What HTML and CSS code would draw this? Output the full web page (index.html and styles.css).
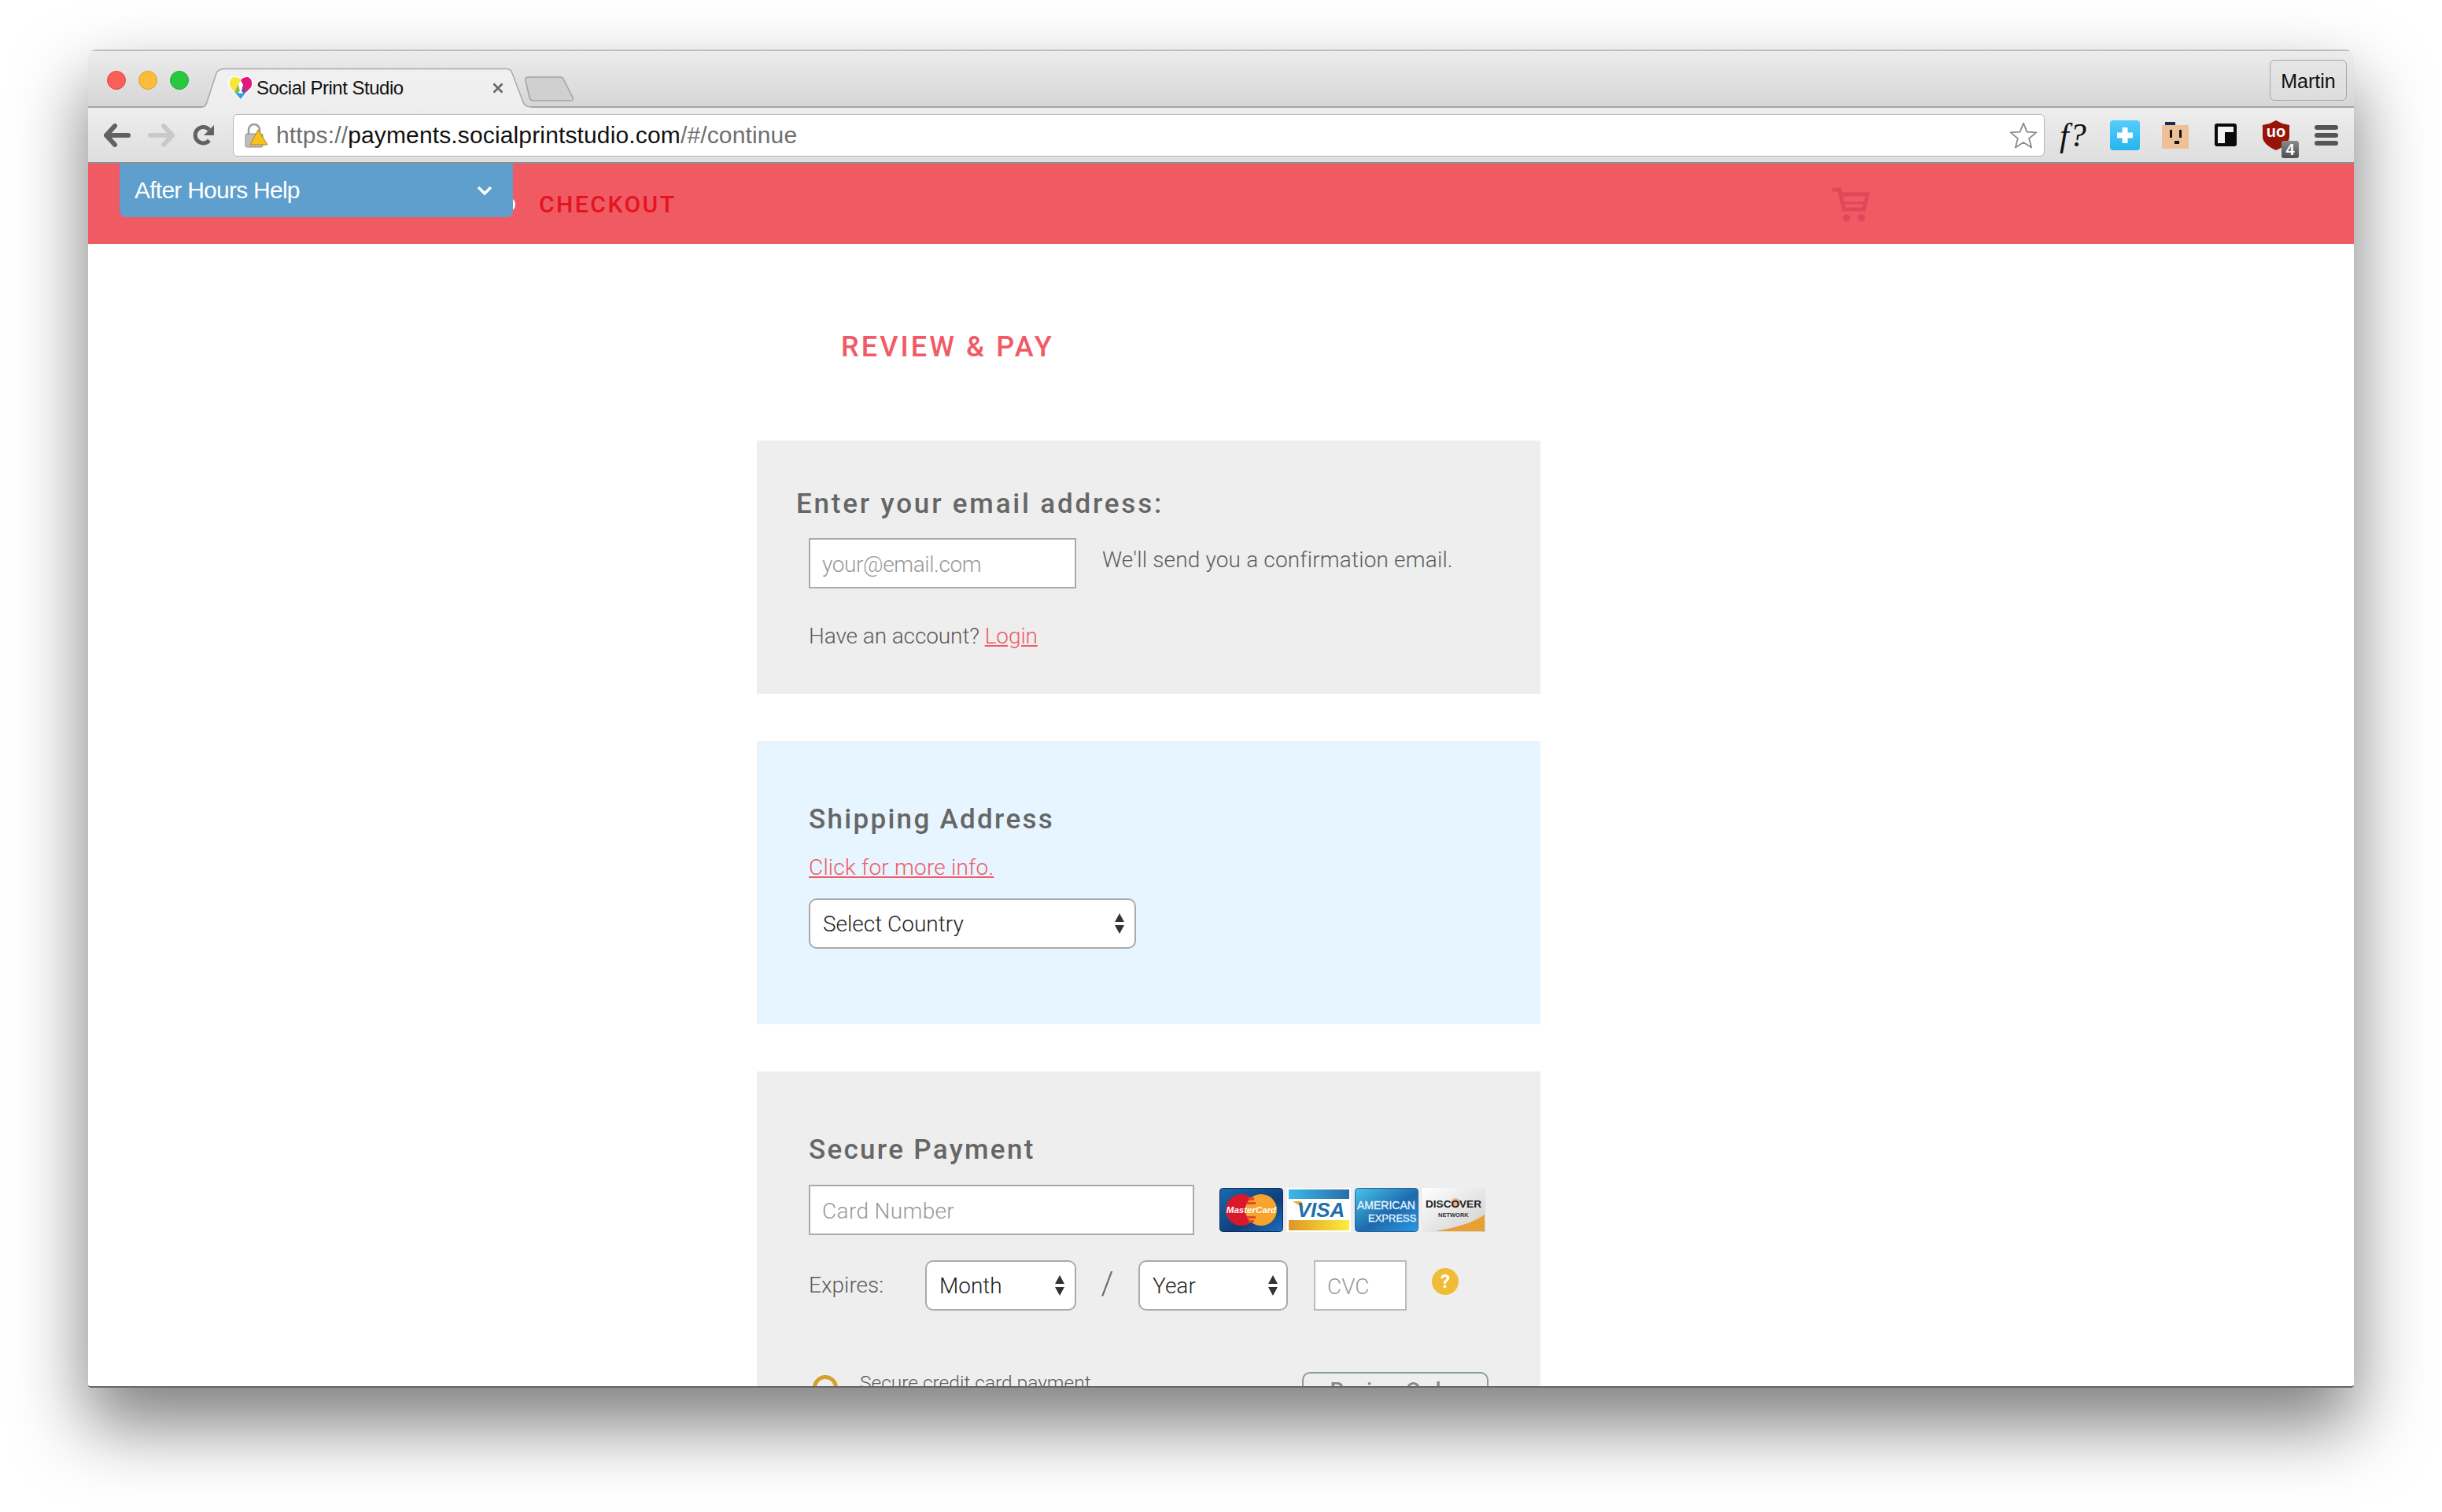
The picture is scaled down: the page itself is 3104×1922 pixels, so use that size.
FILE: index.html
```html
<!DOCTYPE html>
<html lang="en">
<head>
<meta charset="utf-8">
<title>Social Print Studio</title>
<link rel="stylesheet" href="styles.css">
</head>
<body>
<div class="window">
  <div class="titlebar">
    <div class="lights">
      <span class="light light-red"></span>
      <span class="light light-amber"></span>
      <span class="light light-green"></span>
    </div>
    <div class="tab">
      <svg class="tab-shape" viewBox="0 0 418 51" width="418" height="51">
        <defs><linearGradient id="tabfill" x1="0" y1="0" x2="0" y2="1"><stop offset="0" stop-color="#f1f1f1"/><stop offset="1" stop-color="#eeeeee"/></linearGradient></defs>
        <path d="M0 51V49C4 49 5 46 6 43L18 6C19.500 2 23 .5 30 .5H386C390 .5 393 2 394 6L408 43C409 46 412 49 418 49V51z" fill="url(#tabfill)"/>
        <path d="M0 49C4 49 5 46 6 43L18 6C19.500 2 23 .5 30 .5H386C390 .5 393 2 394 6L408 43C409 46 412 49 418 49" fill="none" stroke="#a8a8a8" stroke-width="1.500"/>
      </svg>
      <svg class="favicon" width="32" height="32" viewBox="0 0 32 32">
        <path d="M16 31L2 16C-2 10 1 1 8 1c4 0 6 1.500 8 4 2-2.500 4-4 8-4 7 0 10 9 6 15z" fill="#fff"/>
        <path d="M16 6C14 3 11 2 8 2 3 2 0 9 3 15l5 6 5-10z" fill="#f7e53a"/>
        <path d="M16 6c2-3 5-4 8-4 5 0 8 7 5 13l-6 6-4-9z" fill="#e4177f"/>
        <path d="M8 21l5-10 2 8-2 3.500z" fill="#8cbb45"/>
        <path d="M23 21l-4-10-2 8 2 3.500z" fill="#8d3a8f"/>
        <path d="M8 21l5 1.500 6 0 4-1.500-7 9z" fill="#2ea3dc"/>
        <path d="M16 9l3 2-2 8h-2l-2-8z" fill="#fff"/>
      </svg>
      <span class="tab-title">Social Print Studio</span>
      <svg class="tab-close" width="14" height="14" viewBox="0 0 14 14"><path d="M1.500 1.500l11 11M12.500 1.500l-11 11" stroke="#666" stroke-width="2.600"/></svg>
    </div>
    <svg class="new-tab" width="65" height="32" viewBox="0 0 65 32"><path d="M7 1H45C49 1 50 2 51 5L62 27C63 30 62 31 59 31H12C9 31 8 30 7 27L2 5C1 2 3 1 7 1z" fill="#d0d0d0" stroke="#a2a2a2" stroke-width="1.500"/></svg>
    <div class="tabbar-fill"></div>
    <div class="profile">Martin</div>
  </div>
  <div class="toolbar">
    <svg class="nav-icon" width="34" height="30" viewBox="0 0 34 30"><path d="M14 3L3 15l11 12M3 15h28" fill="none" stroke="#626262" stroke-width="6" stroke-linecap="round" stroke-linejoin="round"/></svg>
    <svg class="nav-icon" width="34" height="30" viewBox="0 0 34 30"><path d="M20 3l11 12-11 12M31 15H3" fill="none" stroke="#c9c9c9" stroke-width="6" stroke-linecap="round" stroke-linejoin="round"/></svg>
    <svg class="nav-icon nav-reload" width="30" height="30" viewBox="0 0 30 30"><path d="M22 21.500A10.200 10.200 0 1 1 22 8" fill="none" stroke="#626262" stroke-width="5"/><path d="M28 2v13H15z" fill="#626262"/></svg>
    <div class="urlbar">
      <svg class="lock" width="30" height="32" viewBox="0 0 30 32"><path d="M5 15V9a7 7 0 0 1 14 0v6" fill="none" stroke="#9a9a9a" stroke-width="2.500"/><rect x="1" y="14" width="22" height="17" rx="2" fill="#bdbdbd" stroke="#8f8f8f"/><path d="M17 9L29 28H7z" fill="#f6c21c" stroke="#b58a10" stroke-linejoin="round"/></svg>
      <div class="url"><span class="url-dim">https://</span>payments.socialprintstudio.com<span class="url-dim">/#/continue</span></div>
      <svg class="star" width="36" height="36" viewBox="0 0 36 36"><path d="M18 2.500l4.400 11.200 12 .7-9.300 7.600 3.100 11.600L18 27.100 7.800 33.600l3.100-11.600-9.300-7.600 12-.7z" fill="#fff" stroke="#8c8c8c" stroke-width="1.800" stroke-linejoin="round"/></svg>
    </div>
    <div class="extensions">
      <span class="ext-font">f?</span>
      <span class="ext-plus"><svg width="26" height="26" viewBox="0 0 26 26"><path d="M13 3v20M3 13h20" stroke="#fff" stroke-width="7"/></svg></span>
      <svg class="ext-face" width="34" height="34" viewBox="0 0 34 34"><rect x="4" width="13" height="5" fill="#1a2a5c"/><rect y="4" width="34" height="30" fill="#edc098"/><rect x="10" y="10" width="3" height="10" fill="#111"/><rect x="22" y="10" width="3" height="10" fill="#111"/><rect x="16" y="24" width="6" height="4" fill="#111"/></svg>
      <svg class="ext-flip" width="28" height="29" viewBox="0 0 28 29"><rect x="2" y="2" width="24" height="25" fill="#f2f2f2" stroke="#0a0a0a" stroke-width="4" rx="1"/><rect x="13" y="11" width="13" height="16" fill="#0a0a0a"/></svg>
      <span class="ext-ublock">
        <svg width="34" height="38" viewBox="0 0 34 38"><path d="M17 0l8 4 9 2v15c0 7-8 13-17 17C8 34 0 28 0 21V6l9-2z" fill="#971408"/><text x="17" y="21" class="ublock-mark">uo</text></svg>
        <span class="ublock-badge">4</span>
      </span>
      <span class="ext-menu"><i></i><i></i><i></i></span>
    </div>
  </div>
  <div class="page">
    <div class="help-menu">
      <span class="help-label">After Hours Help</span>
      <svg width="22" height="14" viewBox="0 0 22 14"><path d="M3 3l8 8 8-8" fill="none" stroke="#fff" stroke-width="3.400"/></svg>
    </div>
    <header class="site-header">
      <span class="logo-peek"></span>
      <span class="checkout">CHECKOUT</span>
      <svg class="cart" width="50" height="44" viewBox="0 0 50 44"><path d="M1 3h9l6 25h25l5-19H12" fill="none" stroke="#e2465a" stroke-width="5"/><path d="M14 20h30" stroke="#e2465a" stroke-width="3"/><circle cx="19" cy="39" r="4.500" fill="#e2465a"/><circle cx="38" cy="39" r="4.500" fill="#e2465a"/></svg>
    </header>
    <main class="content">
      <h1 class="page-title">REVIEW &amp; PAY</h1>
      <div class="panels">
        <section class="panel panel-grey panel-email">
          <h2 class="panel-title panel-title-email">Enter your email address:</h2>
          <div class="email-row">
            <input class="field field-email" placeholder="your@email.com">
            <span class="note">We'll send you a confirmation email.</span>
          </div>
          <p class="account">Have an account? <a class="link" href="#">Login</a></p>
        </section>
        <section class="panel panel-blue">
          <h2 class="panel-title">Shipping Address</h2>
          <p class="info"><a class="link" href="#">Click for more info.</a></p>
          <div class="select select-country">
            <select><option>Select Country</option></select>
            <svg class="arrows" width="12" height="26" viewBox="0 0 12 26"><path d="M6 0l6 11H0zM0 15h12l-6 11z" fill="#333"/></svg>
          </div>
        </section>
        <section class="panel panel-grey panel-pay">
          <h2 class="panel-title">Secure Payment</h2>
          <div class="card-row">
            <input class="field field-card" placeholder="Card Number">
            <div class="cards">
              <svg class="card-logo" width="81" height="56" viewBox="0 0 81 56"><defs><linearGradient id="mcbg" x1="0" y1="0" x2="1" y2="1"><stop offset="0" stop-color="#1a6bb0"/><stop offset=".6" stop-color="#0f3f78"/><stop offset="1" stop-color="#1c72c0"/></linearGradient></defs><rect x=".5" y=".5" width="80" height="55" rx="4" fill="url(#mcbg)" stroke="#122a66"/><circle cx="28" cy="28" r="20" fill="#d9182c"/><circle cx="53" cy="28" r="20" fill="#f7a32c"/><path d="M37 12h7v4h-7zM35 18h11v3H35zM35 36h11v3H35zM37 41h7v3h-7z" fill="#e3472c"/><text x="40.500" y="32" class="mc-mark">MasterCard</text></svg>
              <svg class="card-logo" width="81" height="56" viewBox="0 0 81 56"><defs><linearGradient id="visatop" x1="0" y1="0" x2="1" y2="0"><stop offset="0" stop-color="#3cb8e8"/><stop offset="1" stop-color="#2a6ea8"/></linearGradient><linearGradient id="visabot" x1="0" y1="0" x2="1" y2="0"><stop offset="0" stop-color="#e09426"/><stop offset="1" stop-color="#fbee3c"/></linearGradient></defs><rect width="81" height="56" fill="#fff"/><rect x="2" y="2" width="77" height="12" fill="url(#visatop)"/><rect x="2" y="41" width="77" height="13" fill="url(#visabot)"/><path d="M7 17h11l3 9z" fill="#e8b02e"/><text x="43" y="37" class="visa-mark">VISA</text></svg>
              <svg class="card-logo" width="81" height="56" viewBox="0 0 81 56"><defs><linearGradient id="amexbg" x1="0" y1="0" x2="1" y2="1"><stop offset="0" stop-color="#4bc4ea"/><stop offset=".55" stop-color="#1d69ad"/><stop offset="1" stop-color="#2a9ae4"/></linearGradient></defs><rect x=".5" y=".5" width="80" height="55" rx="4" fill="url(#amexbg)" stroke="#2a5f98"/><text x="3" y="27" class="amex-mark">AMERICAN</text><text x="17" y="43" class="amex-mark amex-second">EXPRESS</text></svg>
              <svg class="card-logo" width="81" height="56" viewBox="0 0 81 56"><defs><linearGradient id="discbg" x1="0" y1="0" x2="1" y2="1"><stop offset="0" stop-color="#fff"/><stop offset="1" stop-color="#cfcfcf"/></linearGradient></defs><rect width="80" height="56" fill="url(#discbg)"/><path d="M16 55Q60 48 79 34v21z" fill="#e9a030"/><circle cx="42" cy="19" r="6" fill="#f08a3c" opacity=".6"/><text x="4" y="25" class="disc-mark">DISCOVER</text><text x="20" y="37" class="disc-sub">NETWORK</text></svg>
            </div>
          </div>
          <div class="expiry-row">
            <span class="expires">Expires:</span>
            <div class="select select-month">
              <select><option>Month</option></select>
              <svg class="arrows" width="12" height="26" viewBox="0 0 12 26"><path d="M6 0l6 11H0zM0 15h12l-6 11z" fill="#333"/></svg>
            </div>
            <span class="slash">/</span>
            <div class="select select-year">
              <select><option>Year</option></select>
              <svg class="arrows" width="12" height="26" viewBox="0 0 12 26"><path d="M6 0l6 11H0zM0 15h12l-6 11z" fill="#333"/></svg>
            </div>
            <input class="field field-cvc" placeholder="CVC">
            <span class="cvc-help">?</span>
          </div>
          <div class="secure-row">
            <span class="secure-ring"></span>
            <span class="secure-text">Secure credit card payment</span>
            <button class="submit" type="button">Review Order</button>
          </div>
        </section>
      </div>
    </main>
  </div>
</div>
</body>
</html>
```
FILE: styles.css
```css
* { box-sizing: border-box; }
html, body { margin: 0; height: 1922px; overflow: hidden; background: #fff; }
body { padding: 63px 112px 0; font-family: Roboto, "Liberation Sans", sans-serif; }

.window {
  width: 2880px; height: 1701px; overflow: hidden; background: #fff;
  border-radius: 10px 10px 4px 4px;
  box-shadow: 0 46px 90px 2px rgba(0,0,0,.5);
  display: flex; flex-direction: column;
  border-bottom: 2px solid #666;
}

.titlebar {
  height: 74px; flex: none; display: flex; align-items: flex-start;
  background: linear-gradient(#ececec, #d6d6d6);
  border-top: 2px solid #bdbdbd; border-bottom: 2px solid #a5a5a5;
}
.lights { display: flex; gap: 16px; padding: 25px 0 0 24px; width: 145px; flex: none; }
.light { width: 24px; height: 24px; border-radius: 50%; }
.light-red { background: #fc5f57; border: 1px solid #e0443e; }
.light-amber { background: #fdbb3c; border: 1px solid #dea123; }
.light-green { background: #2ac840; border: 1px solid #1daa2c; }

.tab {
  position: relative; width: 418px; height: 50px; flex: none; margin-top: 22px;
  display: flex; align-items: center; padding: 0 35px 0 33px;
  font: 24px/30px "Liberation Sans", sans-serif; color: #111;
}
.tab-shape { position: absolute; left: 0; top: 0; overflow: visible; }
.favicon { position: relative; flex: none; }
.tab-title { position: relative; flex: 1; margin-left: 4px; letter-spacing: -.5px; white-space: nowrap; }
.tab-close { position: relative; flex: none; margin-left: 6px; }
.new-tab { flex: none; margin: 32px 0 0 -9px; }
.tabbar-fill { flex: 1; }
.profile {
  width: 98px; height: 52px; margin: 11px 9px 0 0; flex: none;
  border: 1px solid #a6a6a6; border-radius: 6px;
  font: 25px/52px "Liberation Sans", sans-serif; text-align: center; color: #111;
  background: linear-gradient(#e6e6e6, #dcdcdc);
}

.toolbar {
  height: 71px; flex: none; display: flex; align-items: center;
  background: linear-gradient(#eeeeee, #dedede);
  border-bottom: 2px solid #8e8e8e;
  padding-left: 20px;
}
.nav-icon { flex: none; margin-right: 22px; }
.nav-reload { margin-right: 0; margin-left: 0; }
.urlbar {
  width: 2303px; height: 54px; flex: none; margin-left: 22px;
  display: flex; align-items: center;
  background: #fff; border: 1px solid #b5b5b5; border-radius: 6px;
  padding: 0 8px 0 14px;
}
.lock { flex: none; }
.url { flex: 1; padding-left: 10px; font: 30px/50px "Liberation Sans", sans-serif; letter-spacing: .14px; color: #111; white-space: nowrap; }
.url-dim { color: #6f6f6f; }
.star { flex: none; }
.extensions { flex: 1; display: flex; align-items: center; position: relative; height: 70px; }
.ext-font { font: italic 42px/40px "Liberation Serif", serif; color: #111; margin-left: 19px; width: 64px; letter-spacing: 1px; flex: none; }
.ext-plus {
  width: 38px; height: 38px; border-radius: 4px; flex: none;
  background: linear-gradient(#55cdfb, #27b4ee);
  display: flex; align-items: center; justify-content: center;
}
.ext-face { flex: none; margin-left: 28px; }
.ext-flip { flex: none; margin-left: 33px; }
.ext-ublock { position: relative; flex: none; margin-left: 33px; width: 34px; height: 38px; }
.ext-ublock svg { display: block; }
.ublock-mark { font: 700 20px "Liberation Sans", sans-serif; fill: #fff; text-anchor: middle; }
.ublock-badge {
  position: absolute; left: 24px; top: 26px; width: 22px; height: 22px; border-radius: 3px;
  background: linear-gradient(#8b8b8b, #4e4e4e);
  font: 700 20px/22px "Liberation Sans", sans-serif; color: #fff; text-align: center;
}
.ext-menu { display: flex; flex-direction: column; gap: 4px; margin-left: 32px; width: 30px; flex: none; }
.ext-menu i { display: block; height: 6px; border-radius: 3px; background: #555; }

.page { flex: 1; position: relative; overflow: hidden; min-height: 0; }
.help-menu {
  position: absolute; left: 40px; top: 0; width: 500px; height: 68px; z-index: 2;
  background: #5e9fce; border-radius: 0 0 8px 8px;
  color: #fff; font: 30px/32px "Liberation Sans", sans-serif;
  display: flex; align-items: center; justify-content: space-between;
  padding: 0 25px 0 19px;
}
.help-label { letter-spacing: -.75px; }
.site-header {
  height: 102px; background: #ef5a63; display: flex; align-items: center;
  padding-left: 573px; position: relative;
}
.logo-peek { position: absolute; left: 520px; top: 42px; width: 23px; height: 20px; background: #fff; border-radius: 0 10px 10px 0; }
.checkout { font: 500 30px/40px Roboto, sans-serif; letter-spacing: 2.500px; color: #e5131f; width: 1643px; flex: none; padding-top: 2px; }
.cart { flex: none; margin-top: 2px; }

.content { padding-left: 850px; }
.page-title { margin: 109px 0 97px 107px; font: 500 36px/44px Roboto, sans-serif; letter-spacing: 3.100px; color: #f05b65; }
.panels { display: flex; flex-direction: column; gap: 60px; width: 996px; }
.panel { padding: 80px 0 0 66px; color: #666; }
.panel-grey { background: #eeeeee; }
.panel-blue { background: #e6f5ff; padding-bottom: 96px; }
.panel-email { padding-top: 61px; padding-bottom: 57px; }
.panel-pay { height: 600px; }
.panel-title { margin: 0; font: 500 35px/40px Roboto, sans-serif; letter-spacing: 2.300px; color: #666; }
.panel-title-email { margin-left: -16px; letter-spacing: 2.800px; }

.field {
  display: block; height: 64px; flex: none; padding: 2px 15px 0;
  background: #fff; border: 2px solid #aaa; border-radius: 0; outline: 0;
  font: 300 28px Roboto, sans-serif; color: #333;
}
.field::placeholder { color: #999; opacity: 1; }
.field-email { width: 340px; letter-spacing: -.4px; }
.field-card { width: 490px; letter-spacing: .35px; }
.field-cvc { width: 118px; margin-left: 33px; border-color: #bbb; }

.email-row { display: flex; margin-top: 23px; }
.note { margin: 12px 0 0 33px; font: 300 28px/32px Roboto, sans-serif; letter-spacing: .17px; color: #5c5c5c; }
.account { margin: 45px 0 0; font: 300 28px/32px Roboto, sans-serif; letter-spacing: -.1px; color: #5c5c5c; }
.info { margin: 25px 0 0; font: 300 28px/32px Roboto, sans-serif; letter-spacing: .2px; }
.link { color: #f05b65; text-decoration: underline; }

.select { position: relative; height: 64px; flex: none; }
.select select {
  appearance: none; -webkit-appearance: none; display: block; width: 100%; height: 64px;
  background: #fff; border: 2px solid #aaa; border-radius: 10px; outline: 0;
  padding: 0 16px; font: 300 28px Roboto, sans-serif; color: #222;
}
.arrows { position: absolute; right: 13px; top: 19px; }
.select-country { width: 416px; margin-top: 23px; }
.select-country .arrows { right: 15px; }
.select-month { width: 192px; }
.select-month .arrows { right: 15px; }
.select-year { width: 190px; }

.card-row { display: flex; align-items: center; margin-top: 24px; }
.cards { display: flex; gap: 5px; margin-left: 32px; }
.card-logo { display: block; flex: none; }
.mc-mark { font: italic 700 11.500px "Liberation Sans", sans-serif; fill: #fff; text-anchor: middle; }
.visa-mark { font: italic 700 26px "Liberation Sans", sans-serif; fill: #1e6fae; text-anchor: middle; }
.amex-mark { font: 400 14px "Liberation Sans", sans-serif; fill: #e8f6ff; stroke: #e8f6ff; stroke-width: .3px; }
.amex-second { font-size: 13px; }
.disc-mark { font: 700 13.600px "Liberation Sans", sans-serif; fill: #222; }
.disc-sub { font: 700 7.500px "Liberation Sans", sans-serif; fill: #333; }

.expiry-row { display: flex; align-items: flex-start; margin-top: 32px; }
.expires { width: 148px; flex: none; font: 300 28px/64px Roboto, sans-serif; color: #5c5c5c; }
.slash { width: 79px; flex: none; text-align: center; font: 300 40px/60px Roboto, sans-serif; color: #666; }
.cvc-help {
  width: 34px; height: 34px; margin: 10px 0 0 32px; flex: none; border-radius: 50%;
  background: #f0bc35; color: #fff; font: 700 24px/34px Roboto, sans-serif; text-align: center;
}
.secure-row { display: flex; align-items: flex-start; margin-top: 78px; }
.secure-ring { width: 32px; height: 32px; margin: 4px 0 0 5px; border: 5px solid #d4a02e; border-radius: 50%; flex: none; }
.secure-text { margin: -2px 0 0 28px; width: 562px; flex: none; font: 300 24.500px/32px Roboto, sans-serif; color: #5c5c5c; }
.submit {
  width: 237px; height: 60px; flex: none; background: #eee; padding: 0 0 14px;
  border: 2px solid #8a9aa2; border-radius: 10px;
  font: 500 28px Roboto, sans-serif; color: #888;
}
```
